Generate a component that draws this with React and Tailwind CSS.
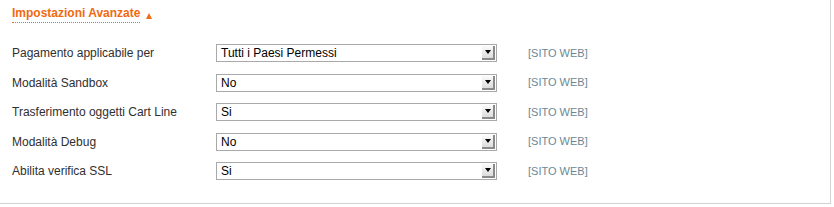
import React from 'react'

const ROWS = [
  { label: 'Pagamento applicabile per', value: 'Tutti i Paesi Permessi' },
  { label: 'Modalità Sandbox', value: 'No' },
  { label: 'Trasferimento oggetti Cart Line', value: 'Si' },
  { label: 'Modalità Debug', value: 'No' },
  { label: 'Abilita verifica SSL', value: 'Si' },
]

function FakeSelect({ value }) {
  return (
    <div className="flex h-[18px] w-[281px] items-center justify-between border border-[#a9a9a9] bg-white pl-[4px] pr-[1px]">
      <span className="text-[12px] leading-none text-black">{value}</span>
      <span className="flex h-[14px] w-[13px] items-center justify-center border-b-2 border-r-2 border-b-[#8a8a8a] border-r-[#8a8a8a] bg-gradient-to-b from-[#fbfbfb] to-[#dcdcdc]">
        <span className="h-0 w-0 border-x-[3.5px] border-t-[4px] border-x-transparent border-t-black" />
      </span>
    </div>
  )
}

export default function App() {
  return (
    <div className="h-[207px] w-[834px] bg-white font-['Liberation_Sans',Arial,sans-serif]">
      <div className="h-[204px] w-[831px] border-b border-r border-[#d3d3d3]">
        <div className="flex items-center pl-[12px] pt-[6px]">
          <span className="border-b border-dotted border-[#ef6a12] pb-[1px] text-[12px] font-bold leading-[15px] text-[#ef6a12]">
            Impostazioni Avanzate
          </span>
          <span className="ml-[6px] mt-[2px] h-0 w-0 border-x-[3.5px] border-b-[6px] border-x-transparent border-b-[#ef6a12]" />
        </div>
        <div className="mt-[21px] flex flex-col gap-[11.5px]">
          {ROWS.map((r) => (
            <div key={r.label} className="flex items-center pl-[12px]">
              <div className="w-[204px] text-[12px] text-[#2f2f2f]">{r.label}</div>
              <FakeSelect value={r.value} />
              <div className="ml-[31px] text-[11px] text-[#6a8896]">[SITO WEB]</div>
            </div>
          ))}
        </div>
      </div>
    </div>
  )
}
